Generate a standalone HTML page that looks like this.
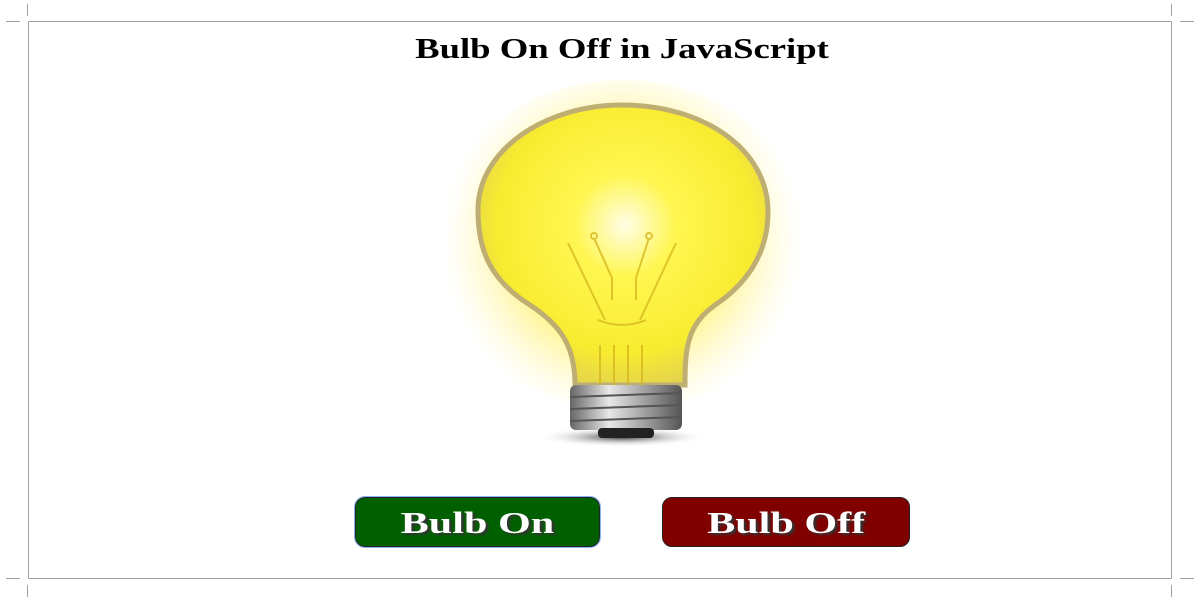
<!DOCTYPE html>
<html><head><meta charset="utf-8"><style>
body{margin:0;width:1200px;height:600px;background:#fff;position:relative;overflow:hidden;font-family:"Liberation Serif",serif}
.l{position:absolute;background:#a0a0a0}
h1{position:absolute;left:0;width:1244px;top:34px;margin:0;text-align:center;font-size:28px;font-weight:bold;color:#000;transform:scaleX(1.31);transform-origin:622px 0}
.b{position:absolute;top:497px;height:50px;border-radius:10px;border:1px solid #222;color:#fff;font-weight:bold;font-size:31px;text-align:center;line-height:50px;box-sizing:border-box}
.b span{display:inline-block;transform:scaleX(1.36);text-shadow:2px 2px 2px #333}
</style></head><body>
<div class="l" style="left:28px;top:21px;width:1144px;height:1px"></div>
<div class="l" style="left:28px;top:578px;width:1144px;height:1px"></div>
<div class="l" style="left:28px;top:21px;width:1px;height:557px"></div>
<div class="l" style="left:1171px;top:21px;width:1px;height:557px"></div>
<div class="l" style="left:27px;top:4px;width:1px;height:12px"></div>
<div class="l" style="left:6px;top:21px;width:14px;height:1px"></div>
<div class="l" style="left:1171px;top:4px;width:1px;height:12px"></div>
<div class="l" style="left:1180px;top:21px;width:14px;height:1px"></div>
<div class="l" style="left:27px;top:585px;width:1px;height:12px"></div>
<div class="l" style="left:6px;top:578px;width:14px;height:1px"></div>
<div class="l" style="left:1171px;top:585px;width:1px;height:12px"></div>
<div class="l" style="left:1180px;top:578px;width:14px;height:1px"></div>
<h1>Bulb On Off in JavaScript</h1>
<svg style="position:absolute;left:0;top:0" width="1200" height="600">
<defs>
<radialGradient id="glow" cx="622" cy="240" r="180" gradientUnits="userSpaceOnUse">
<stop offset="0.6" stop-color="#fff27a" stop-opacity="0.8"/><stop offset="1" stop-color="#fff8c0" stop-opacity="0"/></radialGradient>
<radialGradient id="g" cx="625" cy="225" r="170" gradientUnits="userSpaceOnUse">
<stop offset="0" stop-color="#fffde8"/><stop offset="0.3" stop-color="#fff650"/><stop offset="0.75" stop-color="#f8ec30"/><stop offset="1" stop-color="#e0d050"/></radialGradient>
<linearGradient id="m" x1="0" x2="1"><stop offset="0" stop-color="#666"/><stop offset="0.35" stop-color="#e8e8e8"/><stop offset="0.7" stop-color="#999"/><stop offset="1" stop-color="#555"/></linearGradient>
<radialGradient id="sh" cx="0.5" cy="0.5" r="0.5"><stop offset="0" stop-color="#333"/><stop offset="1" stop-color="#fff" stop-opacity="0"/></radialGradient>
</defs>
<ellipse cx="622" cy="245" rx="190" ry="165" fill="url(#glow)"/>
<ellipse cx="622" cy="437" rx="85" ry="10" fill="url(#sh)"/>
<path d="M575,385 C575,345 560,325 530,305 C490,280 478,250 478,210 C478,150 545,105 622,105 C705,105 768,150 768,212 C768,255 745,285 715,305 C688,325 685,345 685,385 Z" fill="url(#g)" stroke="#bfae72" stroke-width="5"/>
<g stroke="#d6b820" stroke-width="2" fill="none" opacity="0.8">
<path d="M568,243 L605,320 M676,243 L640,320 M594,238 L612,278 L612,300 M649,238 L636,278 L636,300"/>
<circle cx="594" cy="236" r="3"/><circle cx="649" cy="236" r="3"/>
<path d="M598,320 Q622,330 646,320 M600,345 L600,385 M614,345 L614,385 M628,345 L628,385 M642,345 L642,385"/>
</g>
<rect x="570" y="385" width="112" height="45" rx="6" fill="url(#m)"/>
<g stroke="#555" stroke-width="2"><line x1="570" y1="397" x2="682" y2="393"/><line x1="570" y1="409" x2="682" y2="405"/><line x1="570" y1="421" x2="682" y2="417"/></g>
<rect x="598" y="428" width="56" height="10" rx="4" fill="#222"/>
</svg>
<div class="b" style="left:355px;width:245px;background:#006000;outline:1px solid #8ab4f8"><span>Bulb On</span></div>
<div class="b" style="left:662px;width:248px;background:#800000"><span>Bulb Off</span></div>
</body></html>
